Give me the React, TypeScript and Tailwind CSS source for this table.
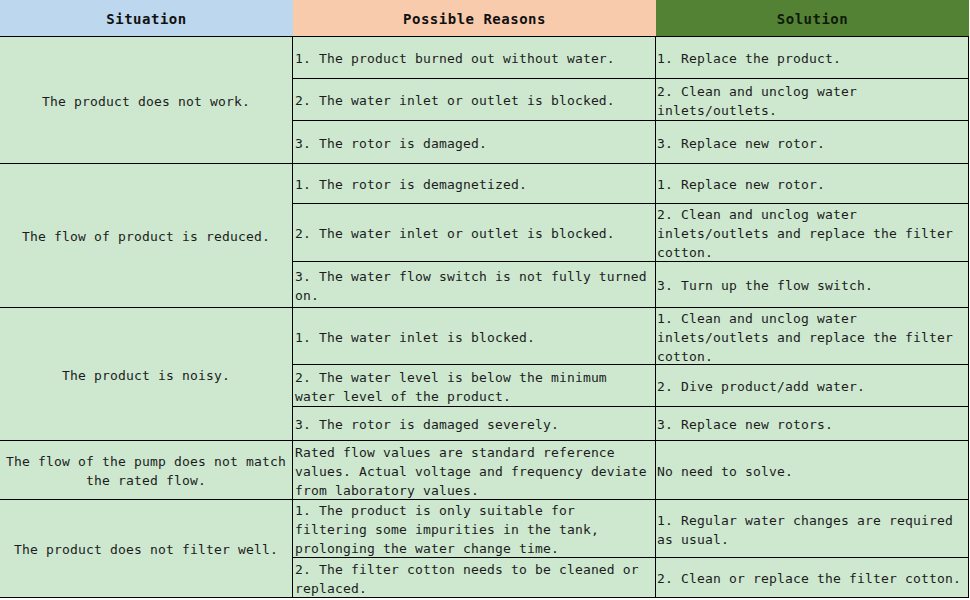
const font = { fontFamily: '"DejaVu Sans Mono", "Liberation Mono", monospace' };

type Sub = { h: number; reason: string[]; solution: string[] };
type Group = { situation: string[]; subs: Sub[] };

const groups: Group[] = [
  {
    situation: ["The product does not work."],
    subs: [
      { h: 42, reason: ["1. The product burned out without water."], solution: ["1. Replace the product."] },
      { h: 42, reason: ["2. The water inlet or outlet is blocked."], solution: ["2. Clean and unclog water", "inlets/outlets."] },
      { h: 43, reason: ["3. The rotor is damaged."], solution: ["3. Replace new rotor."] },
    ],
  },
  {
    situation: ["The flow of product is reduced."],
    subs: [
      { h: 40, reason: ["1. The rotor is demagnetized."], solution: ["1. Replace new rotor."] },
      {
        h: 58,
        reason: ["2. The water inlet or outlet is blocked."],
        solution: ["2. Clean and unclog water", "inlets/outlets and replace the filter", "cotton."],
      },
      { h: 46, reason: ["3. The water flow switch is not fully turned", "on."], solution: ["3. Turn up the flow switch."] },
    ],
  },
  {
    situation: ["The product is noisy."],
    subs: [
      {
        h: 57,
        reason: ["1. The water inlet is blocked."],
        solution: ["1. Clean and unclog water", "inlets/outlets and replace the filter", "cotton."],
      },
      { h: 42, reason: ["2. The water level is below the minimum", "water level of the product."], solution: ["2. Dive product/add water."] },
      { h: 34, reason: ["3. The rotor is damaged severely."], solution: ["3. Replace new rotors."] },
    ],
  },
  {
    situation: ["The flow of the pump does not match", "the rated flow."],
    subs: [
      {
        h: 59,
        reason: ["Rated flow values are standard reference", "values. Actual voltage and frequency deviate", "from laboratory values."],
        solution: ["No need to solve."],
      },
    ],
  },
  {
    situation: ["The product does not filter well."],
    subs: [
      {
        h: 58,
        reason: ["1. The product is only suitable for", "filtering some impurities in the tank,", "prolonging the water change time."],
        solution: ["1. Regular water changes are required", "as usual."],
      },
      { h: 40, reason: ["2. The filter cotton needs to be cleaned or", "replaced."], solution: ["2. Clean or replace the filter cotton."] },
    ],
  },
];

function Lines({ lines }: { lines: string[] }) {
  return (
    <div className="whitespace-pre">
      {lines.map((l, i) => (
        <div key={i}>{l}</div>
      ))}
    </div>
  );
}

export default function App() {
  return (
    <div className="w-[970px] h-[600px] bg-white text-[#1c1c1c] text-[13px] leading-[19px] tracking-[0.17px]" style={font}>
      <div className="w-[969px] flex flex-col">
        <div className="flex h-[37px] border-b border-black font-bold text-[14px] tracking-[0.5px] text-[#111]">
          <div className="w-[293px] bg-[#bdd7ee] flex items-center justify-center pt-[3px]">Situation</div>
          <div className="w-[363px] bg-[#f8cbad] flex items-center justify-center pt-[3px]">Possible Reasons</div>
          <div className="w-[313px] bg-[#548235] flex items-center justify-center pt-[3px] text-[#0f1a08]">Solution</div>
        </div>

        {groups.map((g, gi) => (
          <div key={gi} className="flex bg-[#cde8cf] border-b border-black">
            <div className="w-[293px] border-r border-black flex items-center justify-center text-center pt-[2px]">
              <Lines lines={g.situation} />
            </div>
            <div className="flex flex-col">
              {g.subs.map((s, si) => (
                <div
                  key={si}
                  className={`flex ${si < g.subs.length - 1 ? "border-b border-black" : ""}`}
                  style={{ height: si < g.subs.length - 1 ? s.h : s.h - 1 }}
                >
                  <div className="w-[363px] border-r border-black flex items-center pl-[2px] pt-[2px]">
                    <Lines lines={s.reason} />
                  </div>
                  <div className="w-[313px] border-r border-black flex items-center pl-[1px] pt-[2px]">
                    <Lines lines={s.solution} />
                  </div>
                </div>
              ))}
            </div>
          </div>
        ))}
      </div>
    </div>
  );
}
